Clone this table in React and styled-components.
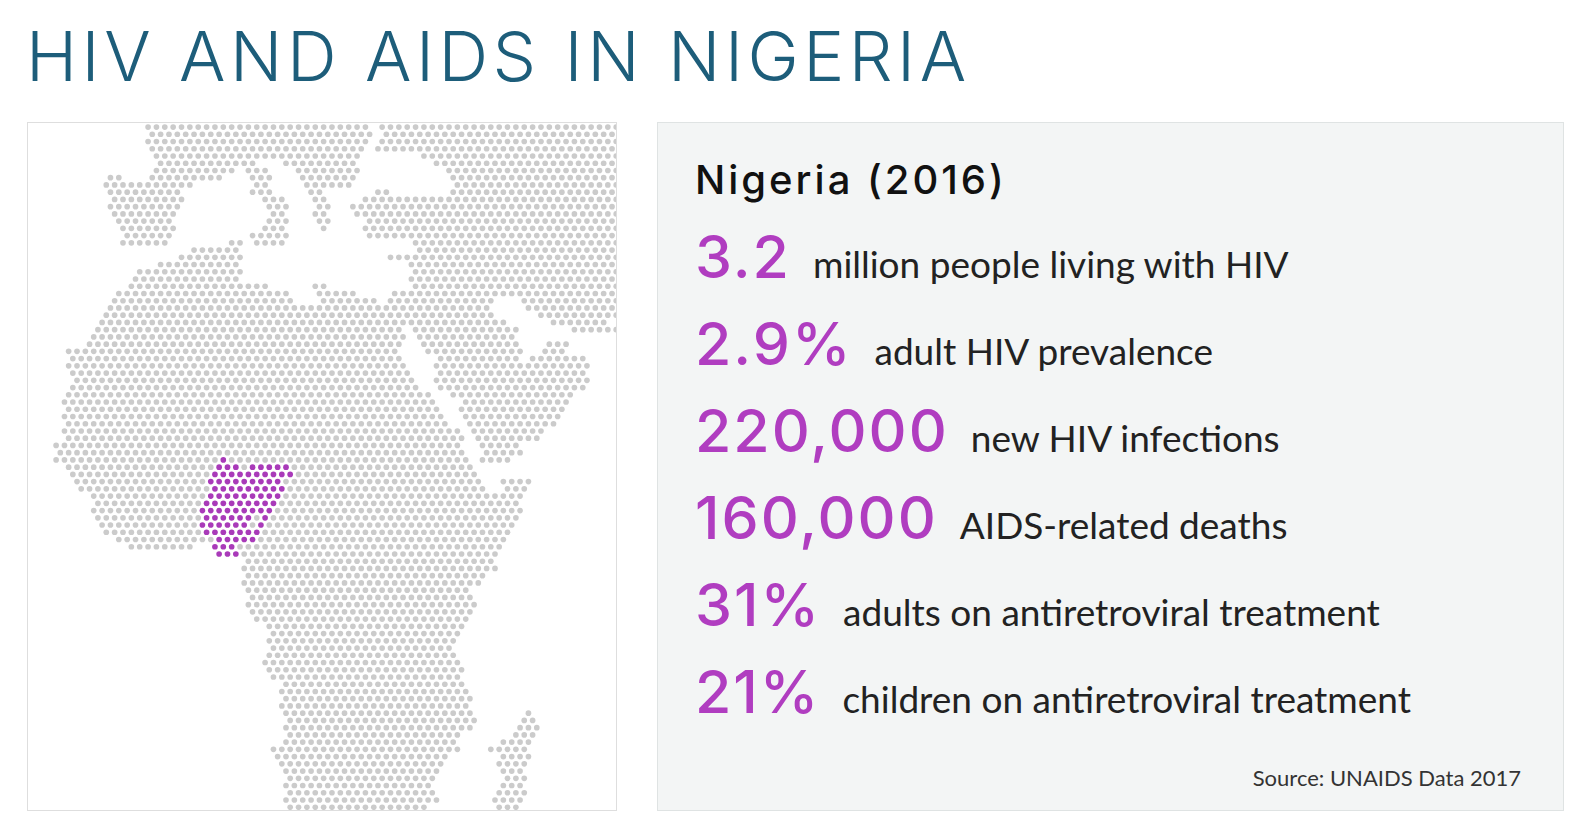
import React from 'react'
import styled, { createGlobalStyle } from 'styled-components'

const STEP_X = 8.26
const STEP_Y = 7.15

// land runs per dot row, in px from the left edge of the map box
const ROWS = [
  [[120, 335], [349, 590]],
  [[120, 334], [353, 590]],
  [[120, 330], [353, 590]],
  [[126, 326], [349, 590]],
  [[128, 224], [236, 323], [391, 590]],
  [[134, 224], [251, 317], [402, 590]],
  [[128, 205], [219, 236], [264, 323], [415, 590]],
  [[79, 92], [126, 190], [222, 236], [270, 323], [421, 590]],
  [[81, 156], [224, 236], [274, 319], [421, 590]],
  [[81, 149], [222, 236], [277, 289], [349, 350], [421, 590]],
  [[82, 151], [232, 251], [281, 289], [336, 590]],
  [[79, 151], [236, 251], [285, 296], [323, 590]],
  [[88, 147], [240, 251], [287, 296], [327, 590]],
  [[90, 141], [241, 251], [289, 296], [336, 590]],
  [[94, 141], [236, 251], [291, 296], [336, 590]],
  [[94, 137], [224, 230], [240, 251], [340, 590]],
  [[92, 134], [200, 213], [228, 251], [380, 590]],
  [[160, 205], [383, 590]],
  [[149, 209], [362, 590]],
  [[134, 209], [380, 590]],
  [[111, 209], [380, 590]],
  [[107, 209], [380, 590]],
  [[101, 232], [281, 296], [380, 590]],
  [[88, 255], [285, 319], [366, 590]],
  [[84, 258], [292, 338], [362, 457], [487, 590]],
  [[84, 357], [366, 457], [493, 590]],
  [[81, 368], [374, 457], [506, 590]],
  [[77, 368], [376, 470], [518, 569]],
  [[71, 366], [383, 478], [540, 582]],
  [[65, 368], [387, 482]],
  [[58, 366], [393, 484], [514, 531]],
  [[43, 364], [398, 485], [508, 531]],
  [[48, 368], [404, 485], [501, 548]],
  [[43, 372], [406, 487], [497, 552]],
  [[45, 376], [404, 550]],
  [[47, 380], [406, 550]],
  [[45, 387], [410, 546]],
  [[39, 398], [419, 537]],
  [[39, 402], [429, 533]],
  [[37, 406], [431, 525]],
  [[37, 408], [436, 521]],
  [[37, 414], [436, 516]],
  [[39, 421], [440, 506]],
  [[37, 425], [442, 501]],
  [[31, 425], [451, 485]],
  [[31, 429], [451, 485]],
  [[31, 433], [453, 474]],
  [[39, 436]],
  [[43, 438]],
  [[48, 442], [468, 497]],
  [[56, 446], [472, 491]],
  [[62, 485]],
  [[65, 485]],
  [[62, 487]],
  [[67, 482]],
  [[73, 480]],
  [[75, 474]],
  [[88, 470]],
  [[101, 160], [183, 465]],
  [[187, 461]],
  [[219, 457]],
  [[215, 461]],
  [[217, 448]],
  [[215, 444]],
  [[221, 436]],
  [[222, 434]],
  [[219, 438]],
  [[222, 434]],
  [[228, 429]],
  [[240, 425]],
  [[245, 423]],
  [[241, 423]],
  [[243, 417]],
  [[241, 417]],
  [[236, 421]],
  [[241, 425]],
  [[245, 425]],
  [[251, 429]],
  [[251, 429]],
  [[251, 434]],
  [[251, 434]],
  [[251, 434], [493, 497]],
  [[255, 438], [487, 501]],
  [[251, 434], [484, 506]],
  [[257, 421], [484, 501]],
  [[251, 417], [466, 497]],
  [[245, 421], [461, 491]],
  [[245, 415], [466, 497]],
  [[247, 404], [468, 493]],
  [[251, 404], [470, 489]],
  [[255, 402], [470, 493]],
  [[258, 398], [466, 487]],
  [[255, 402], [463, 487]],
  [[258, 402], [465, 485]],
  [[260, 395], [463, 485]]
]

const NIGERIA = {
  46: [[194, 194]],
  47: [[186, 209], [224, 255]],
  48: [[183, 258]],
  49: [[179, 245]],
  50: [[181, 249]],
  51: [[177, 245]],
  52: [[175, 241]],
  53: [[175, 236]],
  54: [[175, 221], [232, 236]],
  55: [[175, 217], [232, 232]],
  56: [[175, 222]],
  57: [[187, 219]],
  58: [[183, 205]],
  59: [[187, 209]]
}

const rowOffset = r => 3 + (r % 2) * (STEP_X / 2)
const colIndex = (x, r) => Math.round((x - rowOffset(r)) / STEP_X)
const inRuns = (runs, k, r) =>
  (runs || []).some(([a, b]) => k >= colIndex(a, r) && k <= colIndex(b, r))

const DOTS = ROWS.flatMap((runs, r) => {
  const out = []
  runs.forEach(([a, b]) => {
    for (let k = colIndex(a, r); k <= colIndex(b, r); k++) {
      out.push({
        x: rowOffset(r) + k * STEP_X,
        y: 4 + r * STEP_Y,
        hot: inRuns(NIGERIA[r], k, r)
      })
    }
  })
  return out
})

const STATS = [
  { value: '3.2', label: 'million people living with HIV' },
  { value: '2.9%', label: 'adult HIV prevalence' },
  { value: '220,000', label: 'new HIV infections' },
  { value: '160,000', label: 'AIDS-related deaths' },
  { value: '31%', label: 'adults on antiretroviral treatment' },
  { value: '21%', label: 'children on antiretroviral treatment' }
]

function DotMap () {
  return (
    <MapSvg viewBox='0 0 581 679' preserveAspectRatio='xMinYMin slice'>
      {DOTS.map((d, i) => (
        <circle key={i} cx={d.x} cy={d.y} r={2.8} fill={d.hot ? '#a93ab9' : '#cbcbcb'} />
      ))}
    </MapSvg>
  )
}

function App () {
  return (
    <Page>
      <GlobalStyle />
      <Title>HIV AND AIDS IN NIGERIA</Title>
      <Panels>
        <MapBox>
          <DotMap />
        </MapBox>
        <InfoBox>
          <Heading>Nigeria (2016)</Heading>
          <StatList>
            {STATS.map(s => (
              <StatRow key={s.value}>
                <Value>{s.value}</Value>
                <Label>{s.label}</Label>
              </StatRow>
            ))}
          </StatList>
          <Source>Source: UNAIDS Data 2017</Source>
        </InfoBox>
      </Panels>
    </Page>
  )
}

const GlobalStyle = createGlobalStyle`
  body {
    margin: 0;
    background: #ffffff;
  }
`

const Page = styled.div`
  width: 1584px;
  height: 828px;
  box-sizing: border-box;
  padding: 22px 0 0 27px;
  overflow: hidden;
`

const Title = styled.h1`
  margin: 0 0 31px -1px;
  font-family: Inter, "Liberation Sans", sans-serif;
  font-weight: 300;
  font-size: 69px;
  line-height: 69px;
  letter-spacing: 4.5px;
  white-space: nowrap;
  color: #1d5d7a;
`

const Panels = styled.div`
  display: flex;
  gap: 40px;
  align-items: stretch;
`

const MapBox = styled.div`
  width: 590px;
  height: 689px;
  box-sizing: border-box;
  border: 1px solid #dedede;
  background: #ffffff;
  overflow: hidden;
`

const MapSvg = styled.svg`
  display: block;
  width: 588px;
  height: 687px;
`

const InfoBox = styled.div`
  width: 907px;
  height: 689px;
  box-sizing: border-box;
  border: 1px solid #dfe3e3;
  background: #f3f5f5;
  padding: 37px 42px 19px 37px;
  display: flex;
  flex-direction: column;
`

const Heading = styled.h2`
  margin: 0;
  font-family: Inter, "Liberation Sans", sans-serif;
  font-weight: 500;
  font-size: 40px;
  line-height: 40px;
  letter-spacing: 3px;
  color: #111111;
`

const StatList = styled.div`
  margin-top: 13px;
  display: flex;
  flex-direction: column;
`

const StatRow = styled.div`
  height: 87px;
  display: flex;
  align-items: baseline;
  gap: 22px;
`

const Value = styled.span`
  font-family: Inter, "Liberation Sans", sans-serif;
  font-weight: 500;
  font-size: 59px;
  line-height: 87px;
  letter-spacing: 2px;
  color: #b03dc0;
`

const Label = styled.span`
  font-family: Lato, "Liberation Sans", sans-serif;
  font-weight: 400;
  font-size: 37px;
  line-height: 87px;
  color: #222222;
`

const Source = styled.div`
  margin-top: auto;
  align-self: flex-end;
  font-family: Lato, "Liberation Sans", sans-serif;
  font-size: 22px;
  line-height: 26px;
  color: #333333;
`

export default App
